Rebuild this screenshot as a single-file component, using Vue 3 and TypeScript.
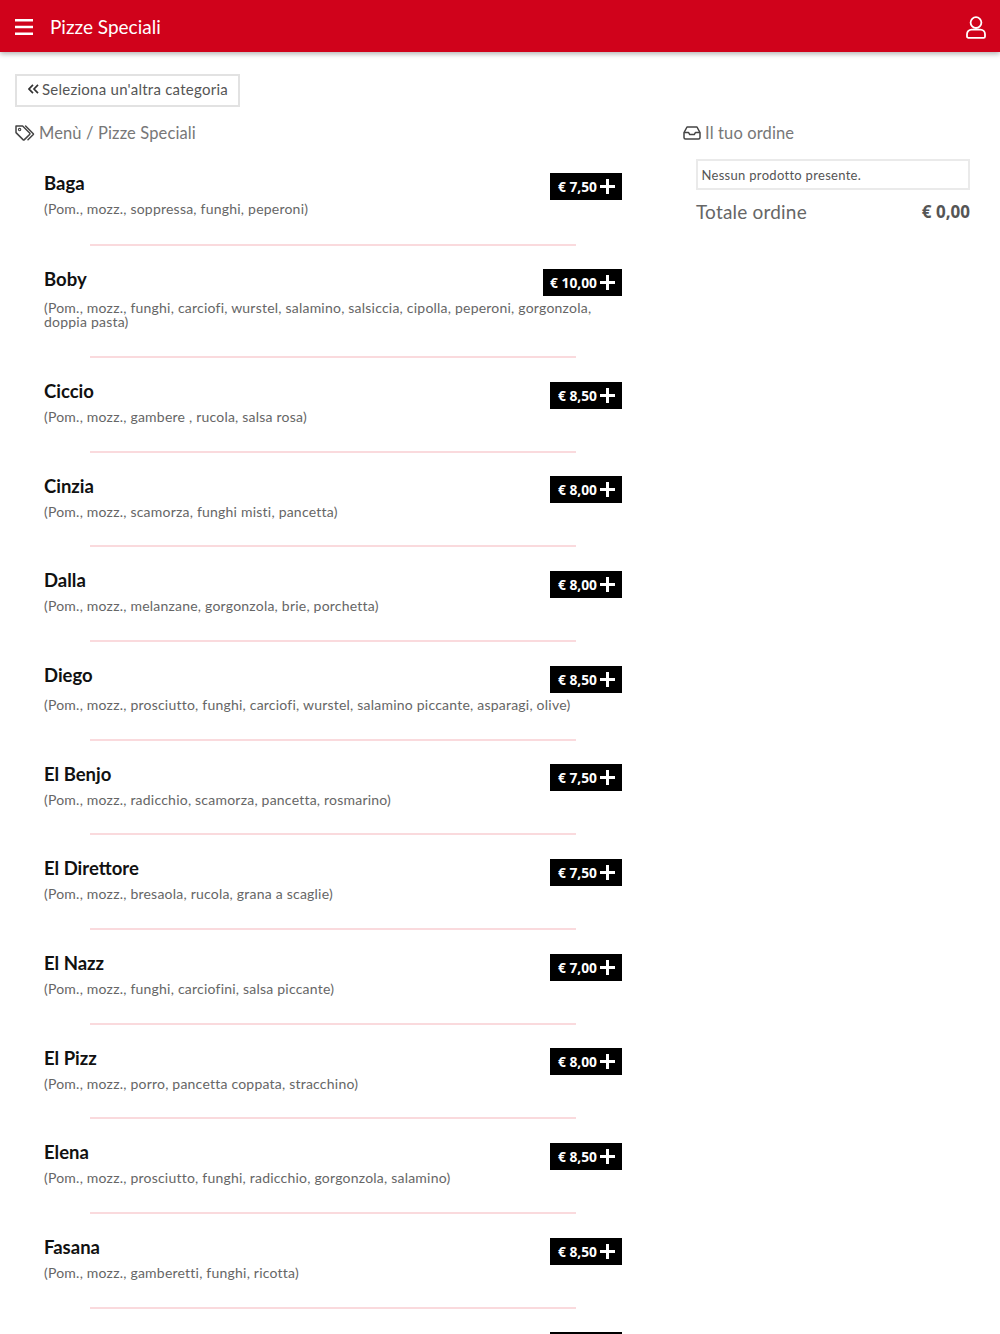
<script setup lang="ts">
interface Pizza {
  name: string
  price: string
  desc: string
  tall?: boolean
}

const pizzas: Pizza[] = [
  { name: 'Baga', price: '€ 7,50', desc: '(Pom., mozz., soppressa, funghi, peperoni)' },
  { name: 'Boby', price: '€ 10,00', desc: '(Pom., mozz., funghi, carciofi, wurstel, salamino, salsiccia, cipolla, peperoni, gorgonzola, doppia pasta)', tall: true },
  { name: 'Ciccio', price: '€ 8,50', desc: '(Pom., mozz., gambere , rucola, salsa rosa)' },
  { name: 'Cinzia', price: '€ 8,00', desc: '(Pom., mozz., scamorza, funghi misti, pancetta)' },
  { name: 'Dalla', price: '€ 8,00', desc: '(Pom., mozz., melanzane, gorgonzola, brie, porchetta)' },
  { name: 'Diego', price: '€ 8,50', desc: '(Pom., mozz., prosciutto, funghi, carciofi, wurstel, salamino piccante, asparagi, olive)', tall: true },
  { name: 'El Benjo', price: '€ 7,50', desc: '(Pom., mozz., radicchio, scamorza, pancetta, rosmarino)' },
  { name: 'El Direttore', price: '€ 7,50', desc: '(Pom., mozz., bresaola, rucola, grana a scaglie)' },
  { name: 'El Nazz', price: '€ 7,00', desc: '(Pom., mozz., funghi, carciofini, salsa piccante)' },
  { name: 'El Pizz', price: '€ 8,00', desc: '(Pom., mozz., porro, pancetta coppata, stracchino)' },
  { name: 'Elena', price: '€ 8,50', desc: '(Pom., mozz., prosciutto, funghi, radicchio, gorgonzola, salamino)' },
  { name: 'Fasana', price: '€ 8,50', desc: '(Pom., mozz., gamberetti, funghi, ricotta)' },
]
</script>

<template>
  <div class="page">
    <header class="topbar">
      <svg class="burger" width="18" height="16" viewBox="0 0 18 16" aria-hidden="true">
        <path d="M0 1.2h18M0 8h18M0 14.8h18" stroke="#fff" stroke-width="2.4" fill="none" />
      </svg>
      <h1 class="title">Pizze Speciali</h1>
      <svg class="user" width="20" height="23" viewBox="0 0 20 23" aria-hidden="true">
        <circle cx="10" cy="6.6" r="5.4" stroke="#fff" stroke-width="1.8" fill="none" />
        <path d="M5.6 13.6h8.8a4.6 4.6 0 0 1 4.6 4.6v2.2a1.4 1.4 0 0 1-1.4 1.4H2.4A1.4 1.4 0 0 1 1 20.4v-2.2a4.6 4.6 0 0 1 4.6-4.6z" stroke="#fff" stroke-width="1.8" fill="none" />
      </svg>
    </header>

    <div class="content">
      <div class="back-row">
        <button class="back" type="button">
          <svg width="11" height="10" viewBox="0 0 11 10" aria-hidden="true">
            <path d="M5 .8 1 5l4 4.2M10 .8 6 5l4 4.2" stroke="#333" stroke-width="1.7" fill="none" />
          </svg>
          <span>Seleziona un'altra categoria</span>
        </button>
      </div>

      <div class="columns">
        <main class="menu">
          <h2 class="crumb">
            <svg width="20" height="16" viewBox="0 0 20 16" aria-hidden="true">
              <path d="M1 1h6.600l7 7a1 1 0 0 1 0 1.400l-5.200 5.200a1 1 0 0 1-1.400 0L1 7.600z" stroke="#444" stroke-width="1.500" fill="none" stroke-linejoin="round" />
              <path d="M10.600 1l7.700 7.700a.6.6 0 0 1 0 .8L13 14.800" stroke="#444" stroke-width="1.500" fill="none" stroke-linecap="round" />
              <circle cx="4.600" cy="4.600" r="1.200" stroke="#444" stroke-width="1.100" fill="none" />
            </svg>
            <span>Menù / Pizze Speciali</span>
          </h2>

          <ul class="list">
            <li v-for="p in pizzas" :key="p.name" class="item" :class="{ tall: p.tall }">
              <div class="info">
                <h3 class="name">{{ p.name }}</h3>
                <p class="desc">{{ p.desc }}</p>
              </div>
              <button class="price" type="button">
                <span>{{ p.price }}</span>
                <svg width="15" height="15" viewBox="0 0 15 15" aria-hidden="true">
                  <path d="M7.500 0v15M0 7.500h15" stroke="#fff" stroke-width="3" fill="none" />
                </svg>
              </button>
            </li>
            <li class="item">
              <div class="info" />
              <button class="price" type="button" aria-label="Aggiungi" />
            </li>
          </ul>
        </main>

        <aside class="order">
          <h2 class="crumb">
            <svg width="18" height="14" viewBox="0 0 18 14" aria-hidden="true">
              <path d="M4 1h10l3 5.600V11.500A1.500 1.500 0 0 1 15.500 13h-13A1.500 1.500 0 0 1 1 11.500V6.600z" stroke="#444" stroke-width="1.500" fill="none" stroke-linejoin="round" />
              <path d="M1 6.600h4.600l1.200 2h4.400l1.200-2H17" stroke="#444" stroke-width="1.500" fill="none" stroke-linejoin="round" />
            </svg>
            <span>Il tuo ordine</span>
          </h2>
          <div class="order-body">
            <div class="empty">Nessun prodotto presente.</div>
            <div class="total">
              <span class="total-label">Totale ordine</span>
              <span class="total-value">€ 0,00</span>
            </div>
          </div>
        </aside>
      </div>
    </div>
  </div>
</template>

<style>
html,
body {
  margin: 0;
  background: #fff;
}
</style>

<style scoped>
.page {
  height: 1334px;
  overflow: hidden;
  font-family: "Lato", "Open Sans", sans-serif;
  color: #555;
}
.topbar {
  height: 52px;
  background: #d0021b;
  box-shadow: 0 2px 5px rgba(0, 0, 0, 0.3);
  display: flex;
  align-items: center;
  padding: 0 15px;
  position: relative;
}
.burger {
  margin-top: 1px;
  flex: none;
}
.title {
  margin: 0 0 0 17px;
  flex: 1;
  font-size: 19px;
  font-weight: 400;
  color: #fff;
}
.user {
  flex: none;
  margin: 2px -0.5px 0 0;
}
.content {
  padding: 21.5px 0 0 15px;
}
.back-row {
  display: flex;
}
.back {
  width: 225px;
  height: 33px;
  padding: 0 0 2px 11px;
  border: 2px solid #e2e2e2;
  background: #fff;
  display: flex;
  align-items: center;
  gap: 3px;
  font: inherit;
  font-size: 15px;
  letter-spacing: 0.25px;
  color: #555;
}
.columns {
  display: flex;
  margin-top: 16px;
}
.menu {
  width: 607px;
  flex: none;
}
.crumb {
  margin: 0;
  height: 20px;
  display: flex;
  align-items: center;
  gap: 4px;
  font-size: 16.5px;
  font-weight: 400;
  letter-spacing: 0.13px;
  color: #777;
}
.list {
  list-style: none;
  margin: 0;
  padding: 0;
}
.item {
  display: flex;
  justify-content: space-between;
  align-items: flex-start;
  padding: 25px 0 27.17px 29px;
  position: relative;
}
.item.tall {
  padding-bottom: 27.67px;
}
.list .item:first-child {
  padding-top: 30.5px;
  padding-bottom: 28.5px;
}
.item::after {
  content: "";
  position: absolute;
  left: 75px;
  width: 486px;
  bottom: -1.5px;
  height: 2px;
  background: #fadadd;
}
.info {
  min-width: 0;
  flex: 1;
}
.name {
  margin: -0.5px 0 0;
  height: 20px;
  line-height: 20px;
  font-size: 18.5px;
  font-weight: 700;
  color: #111;
}
.desc {
  margin: 9px 0 0;
  font-size: 14px;
  line-height: 14px;
  letter-spacing: 0.22px;
  color: #666;
}
.item.tall .desc {
  margin-top: 12.5px;
}
.price {
  flex: none;
  min-width: 72px;
  height: 27px;
  margin: 0 0 0 -50px;
  padding: 0 7px;
  border: 0;
  background: #000;
  color: #fff;
  display: flex;
  align-items: center;
  justify-content: flex-end;
  gap: 3px;
  font-family: "Open Sans", sans-serif;
  font-size: 13.8px;
  font-weight: 700;
}
.order {
  width: 287px;
  margin-left: 61px;
  flex: none;
}
.order-body {
  padding: 16.5px 0 0 13px;
}
.empty {
  height: 31px;
  box-sizing: border-box;
  border: 2px solid #eaeaea;
  padding: 0 3.5px;
  display: flex;
  align-items: center;
  font-size: 13px;
  letter-spacing: 0.3px;
  color: #555;
}
.total {
  display: flex;
  justify-content: space-between;
  align-items: center;
  margin-top: 10px;
}
.total-label {
  font-size: 19px;
  letter-spacing: 0.2px;
  color: #666;
}
.total-value {
  font-family: "Open Sans", sans-serif;
  font-size: 17px;
  font-weight: 700;
  color: #555;
}
</style>
